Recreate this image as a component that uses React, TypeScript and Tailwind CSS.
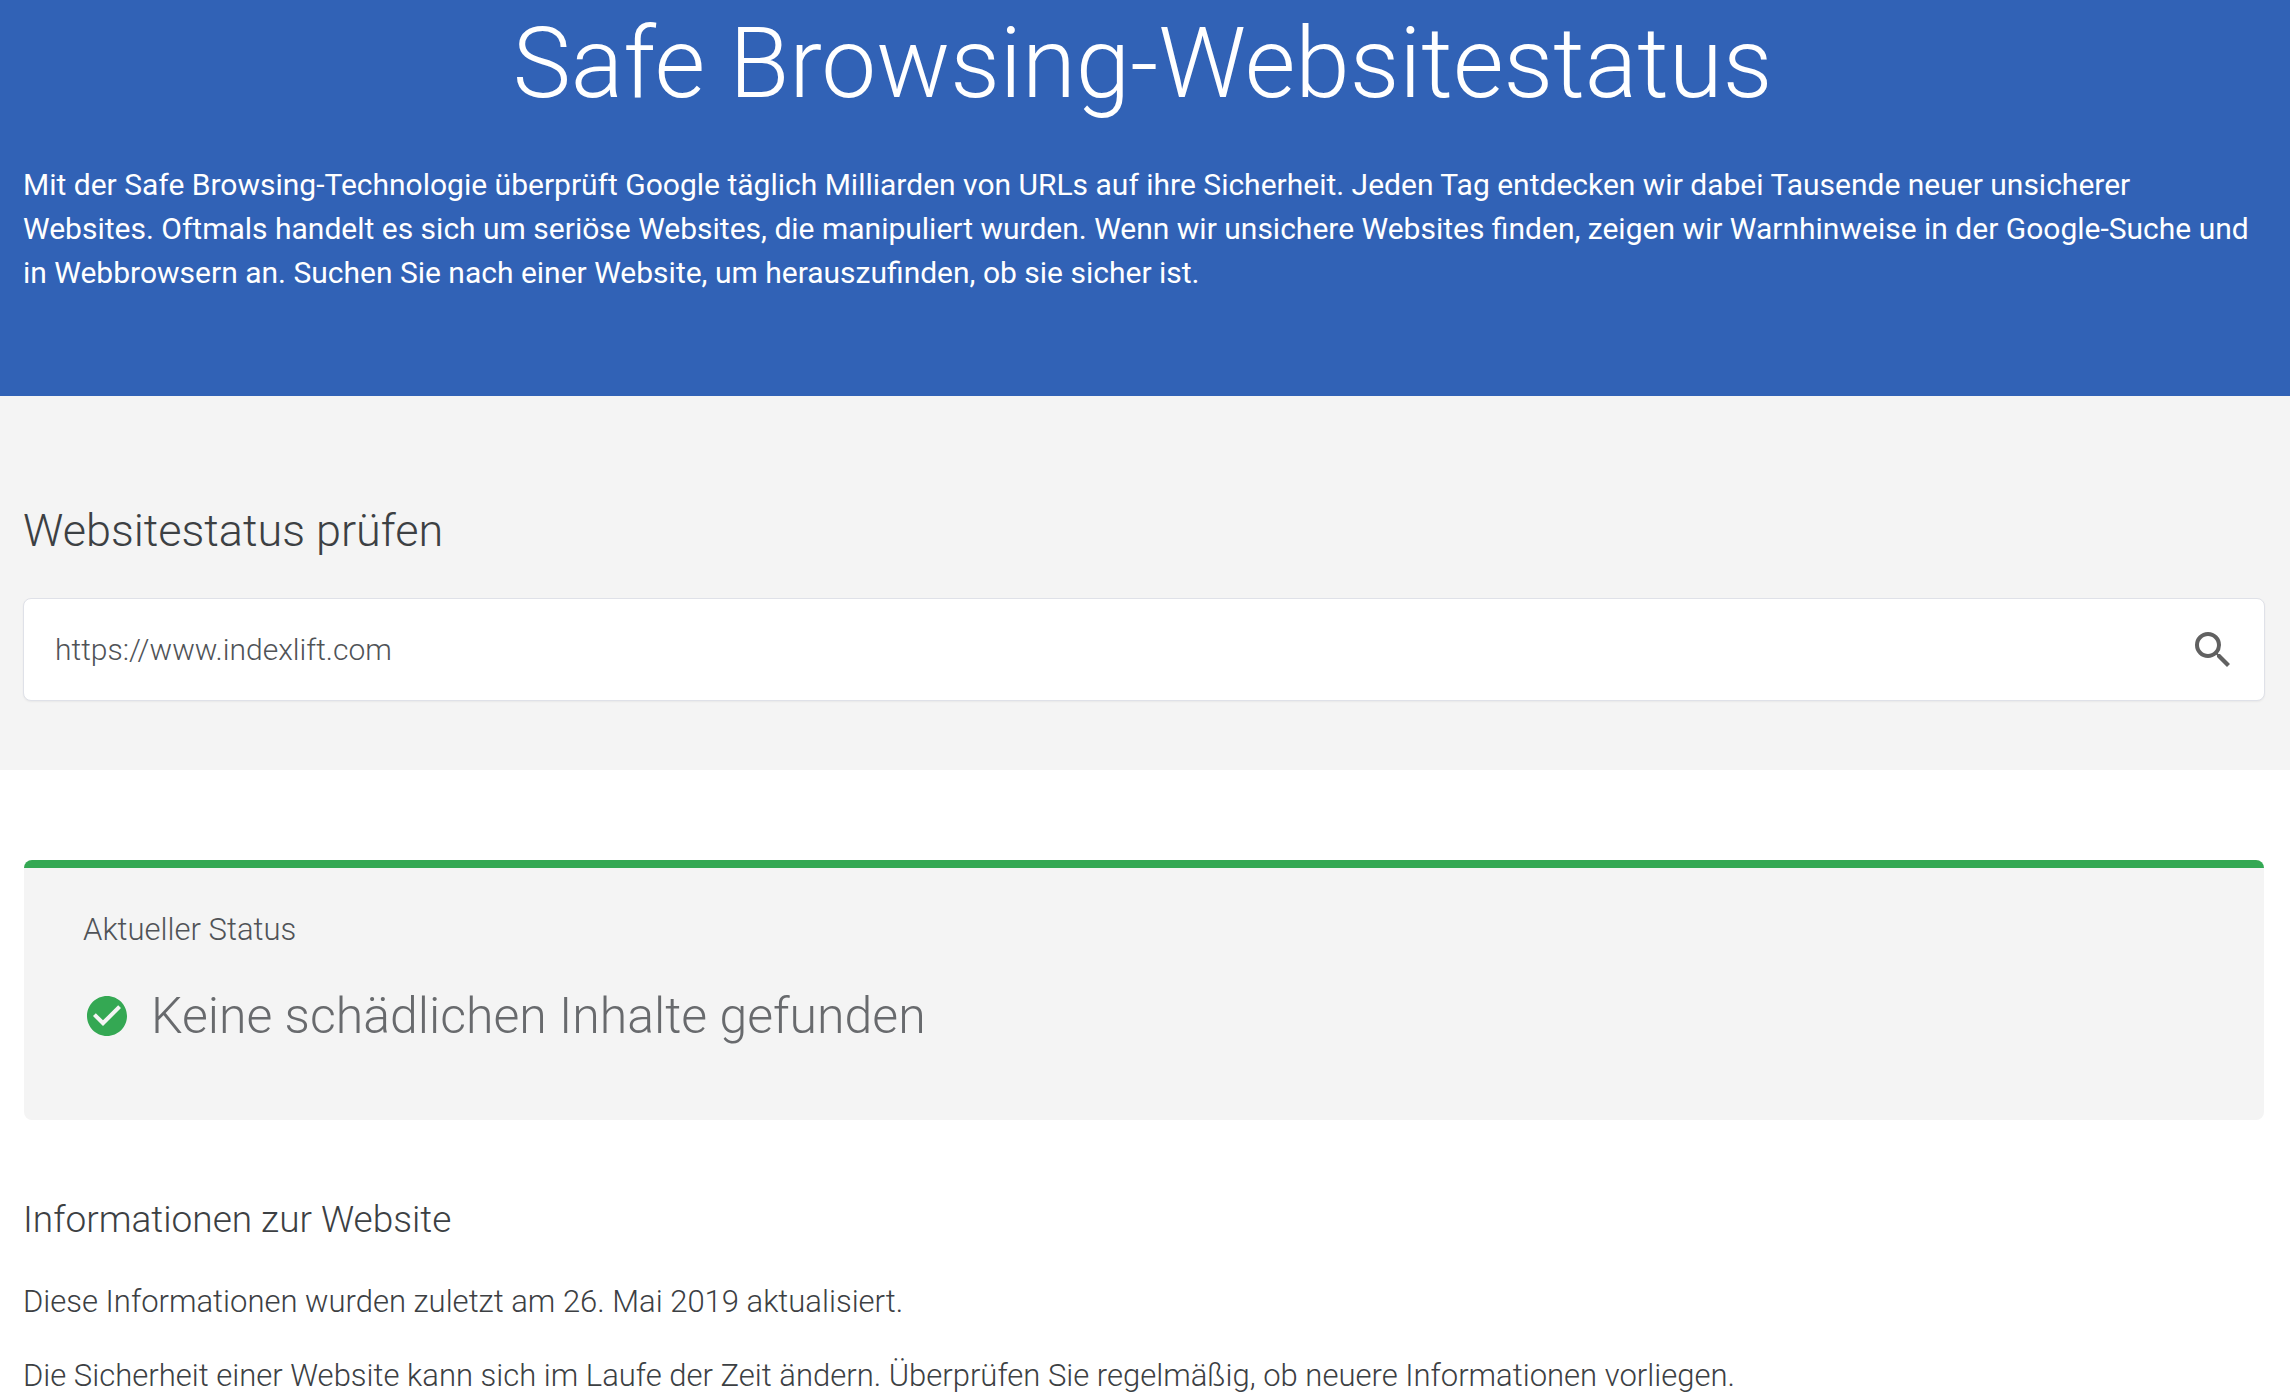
import { useState } from 'react';
import { MdCheckCircle, MdSearch } from 'react-icons/md';

export default function App() {
  const [url, setUrl] = useState('https://www.indexlift.com');

  return (
    <div className="min-h-screen bg-white font-['Roboto',sans-serif] text-[30px] font-light leading-11 text-[#3c4043]">
      <header className="bg-[#3162b6] pt-2 pr-7 pb-[101px] pl-[23px] text-white">
        <h1 className="text-center text-[98px] leading-[112px]">Safe Browsing-Websitestatus</h1>
        <p className="mt-[43px] font-normal">
          Mit der Safe Browsing-Technologie überprüft Google täglich Milliarden von URLs auf ihre Sicherheit. Jeden Tag entdecken wir dabei Tausende neuer unsicherer Websites. Oftmals handelt es sich um seriöse Websites, die manipuliert wurden. Wenn wir unsichere Websites finden, zeigen wir Warnhinweise in der Google-Suche und in Webbrowsern an. Suchen Sie nach einer Website, um herauszufinden, ob sie sicher ist.
        </p>
      </header>

      <section className="bg-[#f4f4f4] pt-[103px] pr-[25px] pb-[69px] pl-[23px]">
        <h2 className="text-[45px] leading-[64px]">
          <label htmlFor="url">Websitestatus prüfen</label>
        </h2>
        <form
          onSubmit={(e) => e.preventDefault()}
          className="mt-[35px] flex h-[103px] items-center rounded-lg border border-[#dfe1e8] bg-white pr-[27px] pl-[31px] shadow-xs"
        >
          <input
            id="url"
            type="text"
            value={url}
            onChange={(e) => setUrl(e.target.value)}
            className="min-w-0 flex-1 text-[#505357] outline-none"
          />
          <button type="submit" aria-label="Suchen" className="text-[#616161]">
            <MdSearch size={48} />
          </button>
        </form>
      </section>

      <main className="pt-[90px] pr-[26px] pl-[23px]">
        <section className="ml-px rounded-lg border-t-8 border-[#34a853] bg-[#f4f4f4] px-[59px] pt-10 pb-[72px]">
          <h3 className="text-[31px] text-[#505357]">Aktueller Status</h3>
          <div className="mt-8 flex items-center gap-5">
            <MdCheckCircle size={48} className="text-[#34a853]" />
            <p className="text-[50px] leading-[64px] text-[#686a6d]">Keine schädlichen Inhalte gefunden</p>
          </div>
        </section>
        <section className="pt-[72px]">
          <h3 className="text-[37px] leading-[56px]">Informationen zur Website</h3>
          <div className="mt-8 space-y-[30px] text-[31px]">
            <p>Diese Informationen wurden zuletzt am 26. Mai 2019 aktualisiert.</p>
            <p>
              Die Sicherheit einer Website kann sich im Laufe der Zeit ändern. Überprüfen Sie regelmäßig, ob neuere Informationen vorliegen.
            </p>
          </div>
        </section>
      </main>
    </div>
  );
}
